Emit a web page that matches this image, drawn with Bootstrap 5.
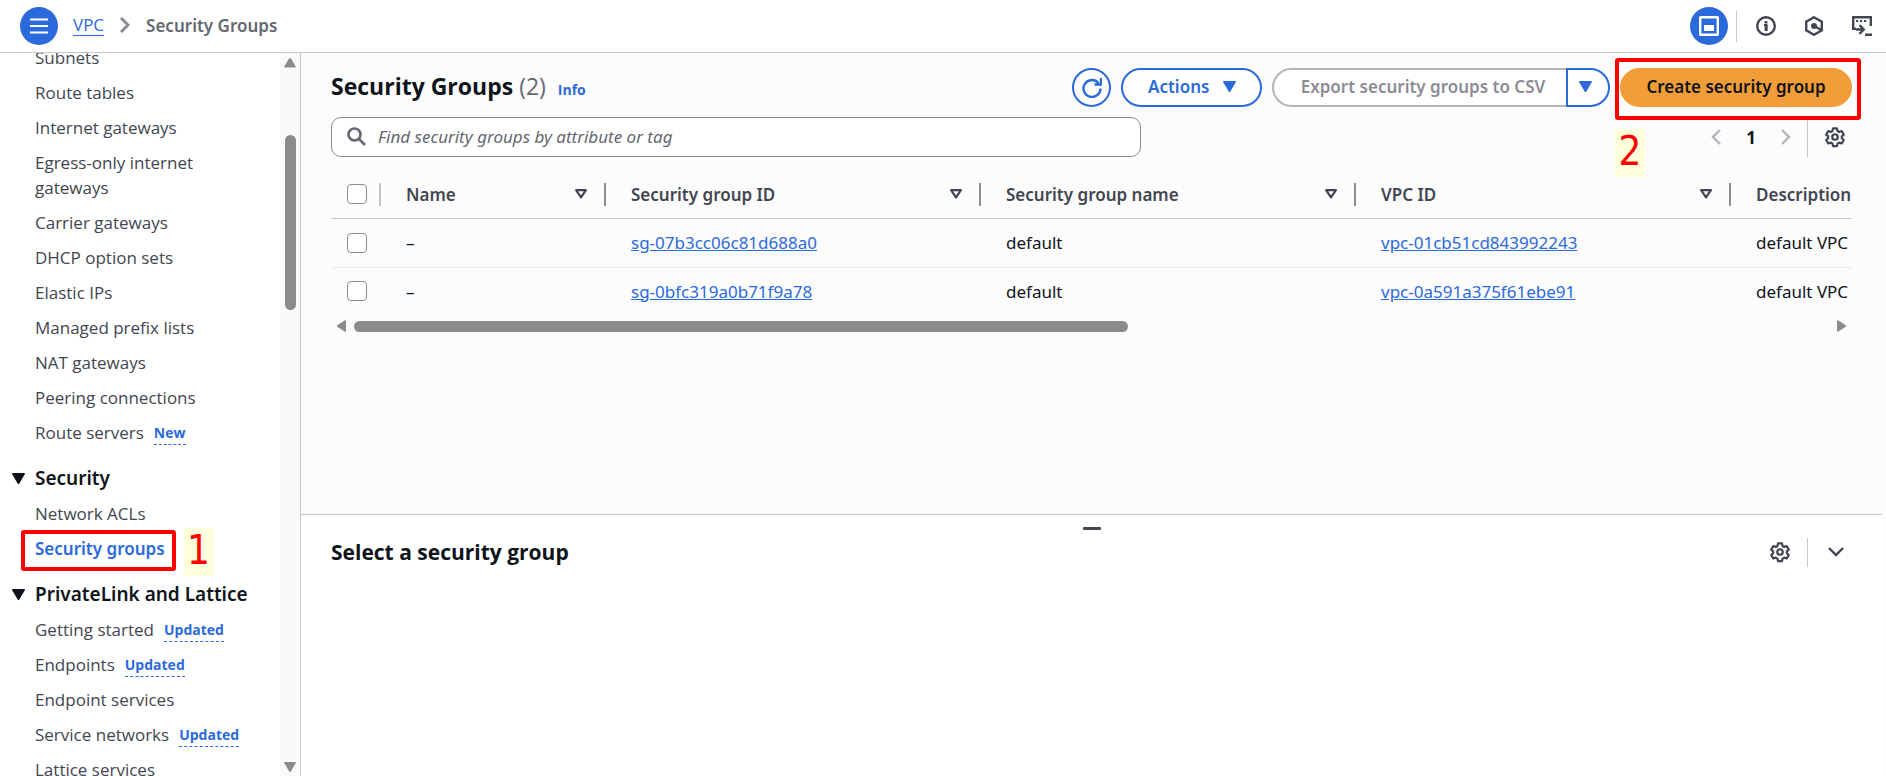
<!DOCTYPE html>
<html lang="en">
<head>
<meta charset="utf-8">
<meta name="viewport" content="width=device-width, initial-scale=1">
<title>Security Groups | VPC</title>
<link href="https://cdn.jsdelivr.net/npm/bootstrap@5.3.0/dist/css/bootstrap.min.css" rel="stylesheet">
<style>
  :root { --blue: #2b6adb; --ink: #0f141a; --text: #424650; --muted: #656871; --line: #c6c6cd; --edge: #8c8c94; --surface: #fcfcfd; }
  body { font-family: "Open Sans", "Noto Sans", sans-serif; font-size: 17px; line-height: 25px; color: var(--ink); background: #fff; }
  .crumb-here, .current, .section-head, .pill, .sg-table, .search-box input { font-family: "Noto Sans", "Open Sans", sans-serif; }
  a { color: var(--blue); }
  svg { display: block; fill: none; stroke: currentColor; stroke-width: 2; flex-shrink: 0; }
  .topbar { height: 53px; padding: 0 14px 0 20px; border-bottom: 1px solid var(--line); }
  .round-btn { width: 38px; height: 38px; border: 0; border-radius: 50%; background: var(--blue); color: #fff; }
  .icon-btn { border: 0; background: none; padding: 0; color: var(--text); }
  .crumbs { margin-left: 15px; gap: 16px; padding-bottom: 2px; }
  .crumbs svg { color: var(--edge); stroke-width: 3; }
  .crumb-link { text-decoration: none; border-bottom: 1px solid var(--blue); line-height: 21px; }
  .crumb-here { color: var(--muted); font-weight: 600; }
  .rule { width: 1px; background: var(--line); }
  .top-icons { gap: 28px; margin-left: 19px; }

  .sidebar { width: 301px; border-right: 1px solid var(--line); }
  .side-nav { margin-top: -8px; padding-left: 12px; }
  .side-nav ul { padding-left: 23px; gap: 10px; max-width: 240px; }
  .side-nav li a { color: var(--text); text-decoration: none; }
  .side-nav li a.current { color: var(--blue); font-weight: 600; }
  .side-nav .tag-link { color: var(--blue); font-size: 14px; line-height: 22px; font-weight: 700; border-bottom: 1px dashed var(--blue); margin-left: 10px; padding-top: 2px; }
  .section-head { border: 0; background: none; padding: 0; gap: 10px; margin: 21px 0 10px; font-size: 19px; line-height: 25px; font-weight: 600; color: var(--ink); }
  .section-head svg { fill: currentColor; stroke: none; }
  .vbar { width: 20px; background: #fafafa; color: #8b8b8b; padding: 5px 0 4px; }
  .vbar .thumb { width: 11px; height: 175px; border-radius: 6px; background: #8b8b8b; margin-top: 67px; }
  .vbar svg, .hbar svg { fill: currentColor; stroke: none; }

  .content { background: var(--surface); padding-right: 4px; }
  .list-area { padding: 15px 30px 0; overflow: hidden; }
  h1 { font-size: 23px; line-height: 30px; font-weight: 700; padding-bottom: 3px; }
  h1 span { font-weight: 400; color: var(--muted); }
  .info { font-size: 14px; font-weight: 700; text-decoration: none; margin-left: 12px; }
  .pill { height: 39px; border: 2px solid var(--blue); border-radius: 20px; background: #fff; color: var(--blue); font-weight: 600; padding: 0 24px 2px; line-height: 25px; white-space: nowrap; }
  .pill svg { fill: currentColor; stroke: none; }
  .pill-round { width: 39px; padding: 0; }
  .pill-menu { width: 141px; gap: 14px; padding-left: 25px; }
  .pill-off { border-color: #b4b4bb; border-right: 0; color: var(--edge); border-radius: 20px 0 0 20px; width: 294px; padding: 0 0 2px 6px; }
  .pill-caret { border-radius: 0 20px 20px 0; width: 44px; padding: 0 6px 2px 0; }
  .pill-main { background: #f29d38; border-color: #f29d38; color: var(--ink); width: 232px; padding: 0 0 2px; }
  .search-box { width: 810px; height: 40px; border: 1px solid var(--edge); border-radius: 10px; background: #fff; padding: 0 15px 1px; gap: 12px; color: var(--muted); }
  .search-box input { border: 0; outline: 0; background: none; font-size: 17px; font-style: italic; color: var(--muted); padding: 0; }
  .search-box input::placeholder { color: var(--muted); opacity: 1; }
  .off { color: #b4b4bb; }
  .page-no { color: var(--ink); padding: 0 25px; }

  .sg-table { table-layout: fixed; width: 100%; margin-top: 14px; }
  .sg-table th, .sg-table td { padding: 0 0 0 25px; white-space: nowrap; vertical-align: middle; }
  .sg-table th { height: 47px; color: var(--text); font-weight: 600; border-bottom: 1px solid var(--line); }
  .sg-table td { height: 48px; }
  .sg-table tbody tr:first-child td { height: 49px; border-bottom: 1px solid #ebebf0; }
  .sg-table th:first-child, .sg-table td:first-child { padding-left: 16px; }
  .grip { width: 2px; height: 23px; background: var(--edge); }
  .head-cell svg { margin-left: auto; margin-right: 16px; }
  .sg-check { appearance: none; display: block; width: 20px; height: 20px; margin: 0; border: 1px solid var(--edge); border-radius: 4px; background: #fff; }
  .sg-check:checked { background: var(--blue); }
  .hbar { color: #8b8b8b; padding: 5px 6px 0; }
  .hbar .track { margin: 0 8px; }
  .hbar .thumb { width: 52.5%; height: 11px; border-radius: 6px; background: #8b8b8b; }

  .panel { height: 262px; background: #fff; border-top: 1px solid var(--line); padding: 0 30px; }
  .handle { width: 18px; height: 3px; border: 0; padding: 0; border-radius: 1px; background: var(--text); margin-top: 12px; }
  .panel-head { margin-top: 7px; padding-right: 4px; }
  h2 { font-size: 21px; line-height: 30px; font-weight: 700; }

  .hot { position: relative; }
  .frame { position: absolute; border: 4px solid #f00; border-radius: 3px; pointer-events: none; z-index: 2; }
  .frame-nav { inset: -6px -11px -10px -14px; }
  .frame-main { inset: -10px -9px -13px -5px; }
  .step { position: absolute; z-index: 2; width: 30px; height: 48px; background: #ffffdc; color: #f00; font: 40px/44px "DejaVu Sans Condensed", "DejaVu Sans", sans-serif; text-align: center; }
  .step-one { left: calc(100% + 19px); top: -8px; }
  .step-two { left: -5px; top: 61px; }
</style>
</head>
<body>
<svg width="0" height="0" class="position-absolute" aria-hidden="true">
  <symbol id="gear" viewBox="0 0 20 20"><path d="M8.2 1.2h3.6l.5 2.3 1.5.9 2.3-.8 1.9 3.2-1.8 1.6v1.7l1.8 1.6-1.9 3.2-2.3-.8-1.5.9-.5 2.3H8.200l-.5-2.3-1.5-.9-2.300.8L2 11.700l1.800-1.600V8.400L2 6.800l1.900-3.200 2.300.8 1.500-.9z" transform="translate(0 1)" stroke-linejoin="round"/><circle cx="10" cy="10" r="2.500"/></symbol>
  <symbol id="sort" viewBox="0 0 12 11"><path d="M1.500 2h9L6 8.500z" stroke-linejoin="round"/></symbol>
  <symbol id="caret" viewBox="0 0 12 10"><path d="M.7 0h10.600q1 0 .5 1L6.800 9.500q-.8 1-1.600 0L.2 1q-.5-1 .5-1z"/></symbol>
</svg>

<div class="d-flex flex-column vh-100 overflow-hidden">
  <header class="topbar d-flex align-items-center flex-shrink-0">
    <button class="round-btn d-flex align-items-center justify-content-center p-0" type="button" aria-label="Open navigation">
      <svg width="18" height="16" viewBox="0 0 18 16"><path d="M0 1.500h18M0 8h18M0 14.500h18"/></svg>
    </button>
    <nav class="crumbs d-flex align-items-center" aria-label="Breadcrumb">
      <a class="crumb-link" href="#">VPC</a>
      <svg width="10" height="16" viewBox="0 0 10 16"><path d="M1 1l7 7-7 7"/></svg>
      <span class="crumb-here">Security Groups</span>
    </nav>
    <div class="d-flex align-items-center ms-auto">
      <button class="round-btn d-flex align-items-center justify-content-center p-0" type="button" aria-label="Split panel">
        <svg width="20" height="20" viewBox="0 0 20 20"><rect x="1.200" y="1.200" width="17.600" height="17.600" rx=".5" stroke-width="2.400"/><path d="M5 9h10v6H5z" fill="currentColor" stroke="none"/></svg>
      </button>
      <span class="rule ms-2" style="height:31px"></span>
      <div class="top-icons d-flex align-items-center">
        <button class="icon-btn" type="button" aria-label="Info"><svg width="20" height="20" viewBox="0 0 20 20"><circle cx="10" cy="10" r="8.800" style="stroke-width:2.400"/><path d="M8 9h2.500v5.500" style="stroke-width:2"/><path d="M10 9v6M10 5v2.400" style="stroke-width:2.800"/></svg></button>
        <button class="icon-btn" type="button" aria-label="Assistant"><svg width="20" height="20" viewBox="0 0 20 20" style="stroke-width:2.400"><path d="M10 1.200l7.800 4.400v8.800L10 18.800l-7.800-4.400V5.600z"/><circle cx="10" cy="10" r="3" fill="currentColor" stroke="none"/><path d="M10 10l7.500 4"/></svg></button>
        <button class="icon-btn" type="button" aria-label="CloudShell"><svg width="20" height="20" viewBox="0 0 20 20" style="stroke-width:2.400"><path d="M18.800 10V1.200H1.200v11.600H4"/><path d="M4 5h2.200M8 5h2.200M12 5h2.200" style="stroke-width:2"/><path d="M4 13.500h7M7.500 9.200l4.200 4.300-4.200 4.300M13 18.800h7"/></svg></button>
      </div>
    </div>
  </header>

  <div class="d-flex flex-fill overflow-hidden">
    <aside class="sidebar d-flex flex-shrink-0 overflow-hidden">
      <nav class="side-nav flex-fill" aria-label="VPC">
        <ul class="list-unstyled d-flex flex-column mb-0">
          <li><a href="#">Subnets</a></li>
          <li><a href="#">Route tables</a></li>
          <li><a href="#">Internet gateways</a></li>
          <li><a href="#">Egress-only internet<br>gateways</a></li>
          <li><a href="#">Carrier gateways</a></li>
          <li><a href="#">DHCP option sets</a></li>
          <li><a href="#">Elastic IPs</a></li>
          <li><a href="#">Managed prefix lists</a></li>
          <li><a href="#">NAT gateways</a></li>
          <li><a href="#">Peering connections</a></li>
          <li class="d-flex"><a href="#">Route servers</a><a class="tag-link" href="#">New</a></li>
        </ul>
        <button class="section-head d-flex align-items-center" type="button"><svg width="13" height="11"><use href="#caret"/></svg>Security</button>
        <ul class="list-unstyled d-flex flex-column mb-0">
          <li><a href="#">Network ACLs</a></li>
          <li class="d-flex"><div class="hot"><a class="current" href="#">Security groups</a><span class="frame frame-nav"></span><span class="step step-one">1</span></div></li>
        </ul>
        <button class="section-head d-flex align-items-center" type="button"><svg width="13" height="11"><use href="#caret"/></svg>PrivateLink and Lattice</button>
        <ul class="list-unstyled d-flex flex-column mb-0">
          <li class="d-flex"><a href="#">Getting started</a><a class="tag-link" href="#">Updated</a></li>
          <li class="d-flex"><a href="#">Endpoints</a><a class="tag-link" href="#">Updated</a></li>
          <li><a href="#">Endpoint services</a></li>
          <li class="d-flex"><a href="#">Service networks</a><a class="tag-link" href="#">Updated</a></li>
          <li><a href="#">Lattice services</a></li>
        </ul>
      </nav>
      <div class="vbar d-flex flex-column align-items-center flex-shrink-0" aria-hidden="true">
        <svg width="12" height="10" viewBox="0 0 12 10"><path d="M6 0q.6 0 1 .6L11.700 8.500q.5 1-.6 1H.9q-1.100 0-.6-1L5 .6Q5.400 0 6 0z"/></svg>
        <div class="thumb"></div>
        <svg class="mt-auto" width="12" height="10"><use href="#caret"/></svg>
      </div>
    </aside>

    <main class="content d-flex flex-column flex-fill overflow-hidden">
      <section class="list-area flex-fill">
        <div class="d-flex align-items-center">
          <h1 class="mb-0">Security Groups <span>(2)</span></h1>
          <a class="info mt-1" href="#">Info</a>
          <div class="d-flex ms-auto" style="gap:10px">
            <button class="pill pill-round d-flex align-items-center justify-content-center" type="button" aria-label="Refresh">
              <svg width="20" height="20" viewBox="0 0 20 20" style="fill:none;stroke:currentColor;stroke-width:2.400"><path d="M18.500 10.500A8.500 8.500 0 1 1 16.500 5M19 0v6.500h-6.500"/></svg>
            </button>
            <button class="pill pill-menu d-flex align-items-center" type="button">Actions<svg width="13" height="11"><use href="#caret"/></svg></button>
            <div class="d-flex">
              <button class="pill pill-off" type="button" disabled>Export security groups to CSV</button>
              <button class="pill pill-caret d-flex align-items-center justify-content-center" type="button" aria-label="More export options"><svg width="13" height="11"><use href="#caret"/></svg></button>
            </div>
            <div class="hot">
              <button class="pill pill-main" type="button">Create security group</button>
              <span class="frame frame-main"></span><span class="step step-two">2</span>
            </div>
          </div>
        </div>
        <div class="d-flex align-items-center justify-content-between" style="margin-top:10px">
          <label class="search-box d-flex align-items-center">
            <svg width="19" height="19" viewBox="0 0 19 19" style="stroke-width:2.600"><circle cx="7.500" cy="7.500" r="6"/><path d="M12 12l6 6"/></svg>
            <input class="flex-fill" type="text" placeholder="Find security groups by attribute or tag" aria-label="Find security groups">
          </label>
          <div class="d-flex align-items-center" style="padding-right:6px">
            <button class="icon-btn off" type="button" disabled aria-label="Previous page"><svg width="10" height="16" viewBox="0 0 10 16" style="stroke-width:2.400"><path d="M9 1L2 8l7 7"/></svg></button>
            <button class="icon-btn page-no fw-bold" type="button">1</button>
            <button class="icon-btn off" type="button" disabled aria-label="Next page"><svg width="10" height="16" viewBox="0 0 10 16" style="stroke-width:2.400"><path d="M1 1l7 7-7 7"/></svg></button>
            <span class="rule ms-3 me-3" style="height:39px"></span>
            <button class="icon-btn" type="button" aria-label="Preferences"><svg width="22" height="22"><use href="#gear"/></svg></button>
          </div>
        </div>

        <table class="sg-table">
          <colgroup><col style="width:50px"><col style="width:225px"><col style="width:375px"><col style="width:375px"><col style="width:375px"><col></colgroup>
          <thead>
            <tr>
              <th><div class="d-flex align-items-center"><input class="sg-check" type="checkbox" aria-label="Select all"><span class="grip ms-auto" style="background:var(--line)"></span></div></th>
              <th><div class="head-cell d-flex align-items-center">Name<svg width="14" height="12"><use href="#sort"/></svg><span class="grip"></span></div></th>
              <th><div class="head-cell d-flex align-items-center">Security group ID<svg width="14" height="12"><use href="#sort"/></svg><span class="grip"></span></div></th>
              <th><div class="head-cell d-flex align-items-center">Security group name<svg width="14" height="12"><use href="#sort"/></svg><span class="grip"></span></div></th>
              <th><div class="head-cell d-flex align-items-center">VPC ID<svg width="14" height="12"><use href="#sort"/></svg><span class="grip"></span></div></th>
              <th>Description</th>
            </tr>
          </thead>
          <tbody>
            <tr><td><input class="sg-check" type="checkbox" aria-label="Select sg-07b3cc06c81d688a0"></td><td>–</td><td><a href="#">sg-07b3cc06c81d688a0</a></td><td>default</td><td><a href="#">vpc-01cb51cd843992243</a></td><td>default VPC</td></tr>
            <tr><td><input class="sg-check" type="checkbox" aria-label="Select sg-0bfc319a0b71f9a78"></td><td>–</td><td><a href="#">sg-0bfc319a0b71f9a78</a></td><td>default</td><td><a href="#">vpc-0a591a375f61ebe91</a></td><td>default VPC</td></tr>
          </tbody>
        </table>
        <div class="hbar d-flex align-items-center" aria-hidden="true">
          <svg width="9" height="12" viewBox="0 0 9 12"><path d="M0 6q0-.6.6-1L8 .3q1-.5 1 .6v10.200q0 1.100-1 .6L.6 7Q0 6.600 0 6z"/></svg>
          <div class="track flex-fill"><div class="thumb"></div></div>
          <svg width="9" height="12" viewBox="0 0 9 12"><path d="M9 6q0-.6-.6-1L1 .3Q0-.2 0 .9v10.200q0 1.100 1 .6L8.400 7q.6-.4.6-1z"/></svg>
        </div>
      </section>

      <section class="panel flex-shrink-0">
        <button class="handle d-block mx-auto" type="button" aria-label="Resize panel"></button>
        <div class="panel-head d-flex align-items-center">
          <h2 class="mb-0">Select a security group</h2>
          <div class="d-flex align-items-center ms-auto">
            <button class="icon-btn" type="button" aria-label="Panel preferences"><svg width="22" height="22"><use href="#gear"/></svg></button>
            <span class="rule mx-3" style="height:29px"></span>
            <button class="icon-btn px-1" type="button" aria-label="Collapse panel"><svg width="16" height="10" viewBox="0 0 16 10" style="stroke-width:2.400"><path d="M1 1l7 7 7-7"/></svg></button>
          </div>
        </div>
      </section>
    </main>
  </div>
</div>
<script src="https://cdn.jsdelivr.net/npm/bootstrap@5.3.0/dist/js/bootstrap.bundle.min.js"></script>
</body>
</html>
